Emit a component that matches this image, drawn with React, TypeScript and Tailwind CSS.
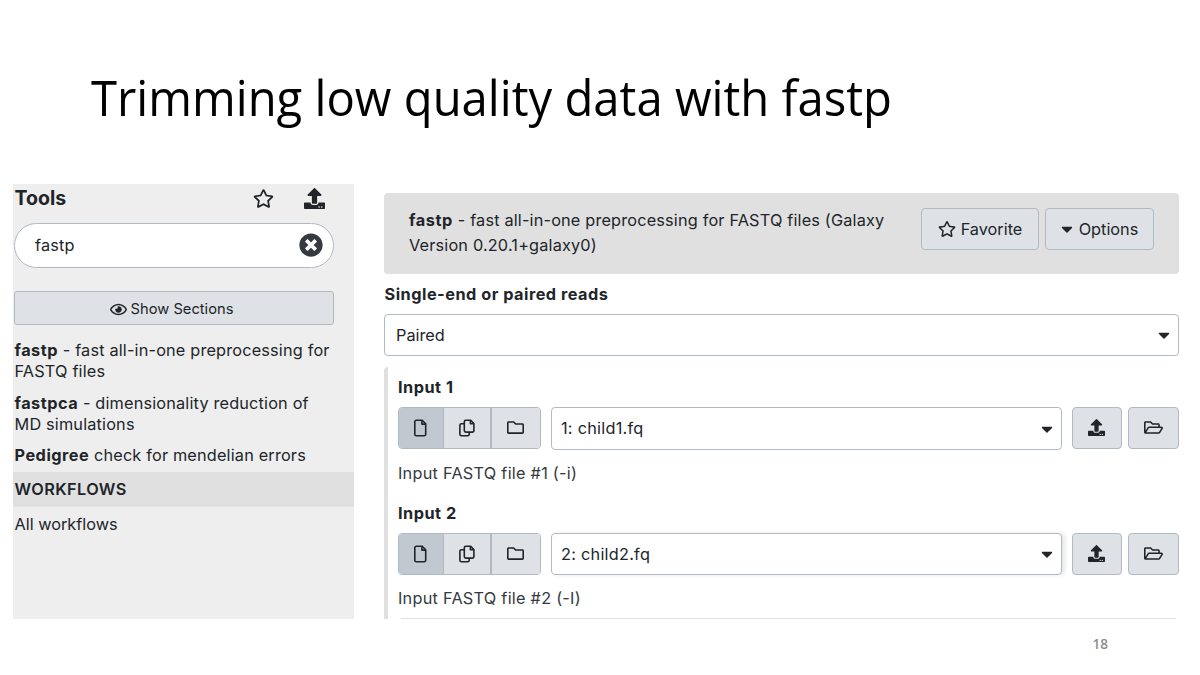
import type { ReactNode } from "react";
import {
  FaCaretDown,
  FaRegEye,
  FaRegFolder,
  FaRegFolderOpen,
  FaRegStar,
  FaTimesCircle,
  FaUpload,
} from "react-icons/fa";

const button =
  "flex shrink-0 items-center justify-center border border-[#b1bac3] bg-[#dee2e6] text-[#212529]";

function FileIcon() {
  return (
    <svg viewBox="0 0 13 18" className="mr-px h-[18px] w-[13px]" fill="none" stroke="currentColor" strokeWidth="1.6" strokeLinejoin="round">
      <path d="M2.3 1.3h5.9l3.5 3.5v10.4a1.5 1.5 0 0 1-1.5 1.5H2.3a1.5 1.5 0 0 1-1.5-1.5V2.8a1.5 1.5 0 0 1 1.5-1.5z" />
      <path d="M7.9 1.5v3.6h3.6" />
    </svg>
  );
}

function CopyIcon() {
  return (
    <svg viewBox="0 0 16 18" className="h-[18px] w-[16px]" fill="none" stroke="currentColor" strokeWidth="1.6" strokeLinejoin="round">
      <path d="M6.8 1.3h4.9l3.2 3.2v7.1a1.5 1.5 0 0 1-1.5 1.5H6.8a1.5 1.5 0 0 1-1.5-1.5V2.8a1.5 1.5 0 0 1 1.5-1.5z" />
      <path d="M11.4 1.5v3.3h3.3" />
      <path d="M5.3 4.7H2.4A1.5 1.5 0 0 0 .9 6.2v9a1.5 1.5 0 0 0 1.5 1.5h6.3a1.5 1.5 0 0 0 1.5-1.5v-2.1" />
    </svg>
  );
}

function ToolLink({ name, children }: { name: string; children: ReactNode }) {
  return (
    <a className="block leading-[21px] whitespace-nowrap">
      <b className="font-bold tracking-[0.5px]">{name}</b> {children}
    </a>
  );
}

function ToolsPanel() {
  return (
    <aside className="h-[435px] w-[341px] shrink-0 bg-[#eeeeee] text-[16.3px] tracking-[0.17px] text-[#212529]">
      <div className="flex h-7 items-center pr-[29px] pl-[1.5px]">
        <h2 className="flex-1 pt-[2px] text-[19.5px] font-bold tracking-normal">Tools</h2>
        <FaRegStar className="mr-[30px] size-[21px]" />
        <FaUpload className="size-[21px]" />
      </div>
      <div className="mt-[11px] ml-px flex h-[45px] w-[320px] items-center justify-between rounded-full border border-[#b1bac3] bg-white pr-[10px] pb-px pl-[20px]">
        <span>fastp</span>
        <FaTimesCircle className="size-[24px] text-[#343a40]" />
      </div>
      <button className={`${button} mt-[23px] ml-px h-[34px] w-[320px] gap-[4px] rounded-[3px] pt-[2px] pr-[5px] text-[14.7px] tracking-normal`}>
        <FaRegEye className="size-[17px]" />
        Show Sections
      </button>
      <nav className="mt-[15px] flex flex-col gap-[10.5px] pl-[1.5px]">
        <ToolLink name="fastp">
          - fast all-in-one preprocessing for
          <br />
          FASTQ files
        </ToolLink>
        <ToolLink name="fastpca">
          - dimensionality reduction of
          <br />
          MD simulations
        </ToolLink>
        <ToolLink name="Pedigree">check for mendelian errors</ToolLink>
      </nav>
      <div className="mt-[6px] flex h-[35px] items-center bg-[#e0e0e0] pl-[1.5px] font-semibold tracking-[0.4px]">WORKFLOWS</div>
      <div className="mt-[7px] pl-[1.5px] leading-[21px] tracking-normal">All workflows</div>
    </aside>
  );
}

function DataInput({ label, value, help, raised }: { label: string; value: string; help: string; raised?: boolean }) {
  return (
    <div>
      <div className="h-[40px] leading-[40px] font-bold tracking-[0.5px]">{label}</div>
      <div className="flex h-[43px] items-start">
        <div className="flex h-[42px] w-[143px] overflow-hidden rounded-[4px] border border-[#b1bac3]">
          <div className="flex w-[44px] items-center justify-center bg-[#c1c8cf]">
            <FileIcon />
          </div>
          <div className="flex w-[49px] items-center justify-center border-r-2 border-l border-[#b1bac3] bg-[#dee2e6]">
            <CopyIcon />
          </div>
          <div className="flex flex-1 items-center justify-center bg-[#dee2e6] pr-px pb-px">
            <FaRegFolder className="size-[17px]" />
          </div>
        </div>
        <div
          className={`ml-[10px] flex w-[511px] items-center justify-between rounded-[4px] border border-[#b1bac3] bg-white pr-[5px] pl-[9px] tracking-[0.25px] ${
            raised ? "h-[42px] shadow-[3px_0_4px_#00000018]" : "h-[43px]"
          }`}
        >
          <span>{value}</span>
          <FaCaretDown className="size-[18px]" />
        </div>
        <button className={`${button} ml-[10px] h-[42px] w-[50px] rounded-[4px] pr-px pb-px`}>
          <FaUpload className="size-[17px]" />
        </button>
        <button className={`${button} ml-[6px] h-[42px] w-[51px] rounded-[4px] pb-px`}>
          <FaRegFolderOpen className="size-[19px]" />
        </button>
      </div>
      <div className={`h-[43px] tracking-[0.25px] text-[#343a40] ${raised ? "leading-[44px]" : "leading-[46px]"}`}>{help}</div>
    </div>
  );
}

function ToolForm() {
  return (
    <main className="mt-[9px] ml-[30px] h-[426px] w-[796px] overflow-hidden pr-px text-[16.3px] text-[#212529]">
      <header className="flex h-[81px] items-start rounded-[4px] bg-[#e0e0e0] pt-[15px] pr-[25px] pl-[25px]">
        <p className="flex-1 leading-[25px] tracking-[0.17px] whitespace-nowrap">
          <b className="font-bold tracking-[0.6px]">fastp</b> - fast all-in-one preprocessing for FASTQ files (Galaxy
          <br />
          Version 0.20.1+galaxy0)
        </p>
        <button className={`${button} h-[42px] w-[118px] gap-[5px] rounded-[4px]`}>
          <FaRegStar className="size-[18px]" />
          Favorite
        </button>
        <button className={`${button} ml-[6px] h-[42px] w-[109px] gap-[3px] rounded-[4px] pr-[3px]`}>
          <FaCaretDown className="size-[18px]" />
          Options
        </button>
      </header>
      <div className="h-[40px] pl-[0.5px] leading-[41px] font-bold tracking-[0.5px]">Single-end or paired reads</div>
      <div className="flex h-[42px] items-center justify-between rounded-[4px] border border-[#b1bac3] pr-[5px] pl-[11px]">
        <span>Paired</span>
        <FaCaretDown className="size-[18px]" />
      </div>
      <section className="mt-[11px] h-[252px] rounded-tl-[4px] border-l-4 border-[#e0e0e0] pl-[10px]">
        <DataInput label="Input 1" value="1: child1.fq" help="Input FASTQ file #1 (-i)" />
        <DataInput label="Input 2" value="2: child2.fq" help="Input FASTQ file #2 (-I)" raised />
        <hr className="mr-[3px] ml-[3px] -mt-px border-[#dfdfdf]" />
      </section>
    </main>
  );
}

export default function App() {
  return (
    <div className="h-[675px] w-[1200px] overflow-hidden bg-white font-['Inter',sans-serif]">
      <div className="h-[184px] pt-[62px] pl-[91px]">
        <h1 className="w-max origin-left scale-x-[0.964] font-['Open_Sans',sans-serif] text-[49px] leading-[70px] font-normal whitespace-nowrap text-black">
          Trimming low quality data with fastp
        </h1>
      </div>
      <div className="flex pl-[13px]">
        <ToolsPanel />
        <ToolForm />
      </div>
      <footer className="pt-[15px] pr-[92px] text-right font-['Open_Sans',sans-serif] text-[13.5px] leading-[20px] font-semibold text-[#8b8b8b]">
        18
      </footer>
    </div>
  );
}
